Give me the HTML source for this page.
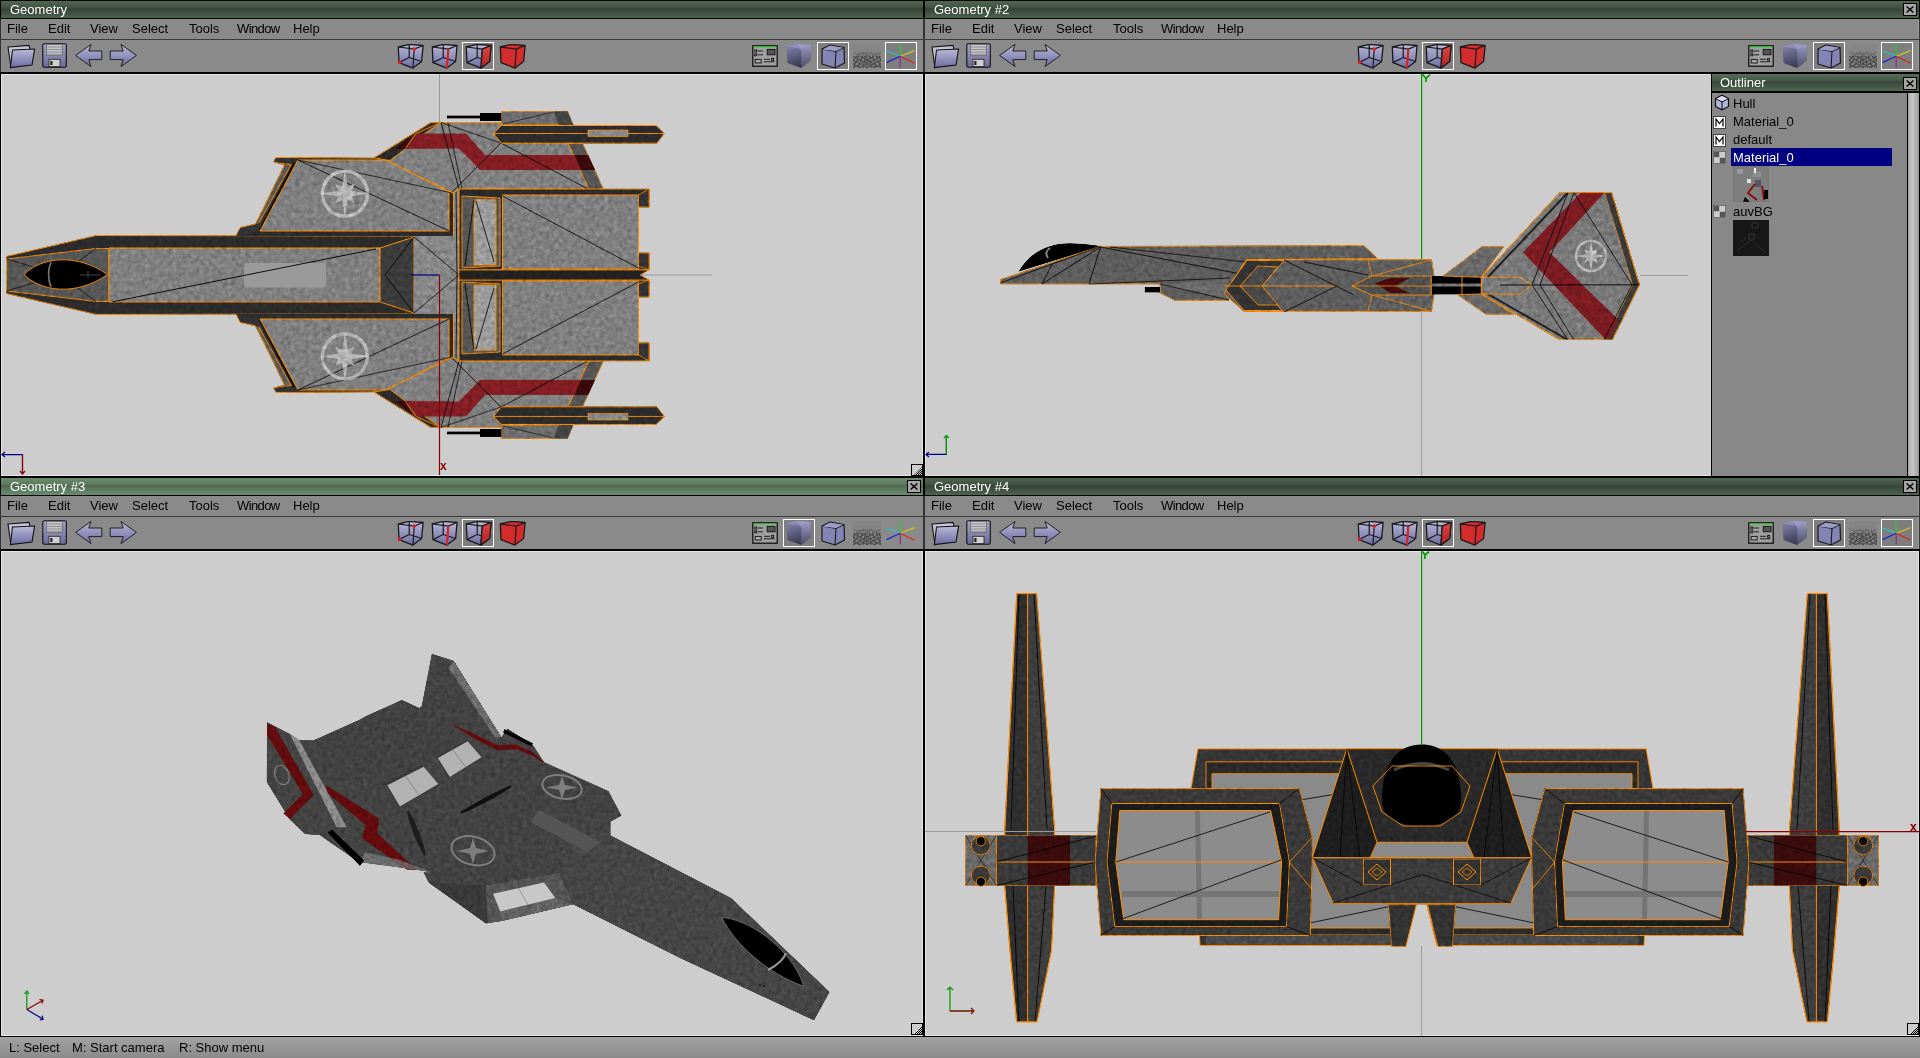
<!DOCTYPE html>
<html><head><meta charset="utf-8"><style>
html,body{margin:0;padding:0;width:1920px;height:1058px;overflow:hidden;background:#000;font-family:"Liberation Sans", sans-serif;font-size:13px}
.t{position:absolute;white-space:nowrap;font-size:13px;will-change:transform}
</style></head><body>

<svg width="0" height="0" style="position:absolute">
<defs>
 <linearGradient id="lav" x1="0" y1="0" x2="0" y2="1"><stop offset="0" stop-color="#b9b9d6"/><stop offset="1" stop-color="#6c6ca4"/></linearGradient>
 <linearGradient id="lav2" x1="0" y1="0" x2="0" y2="1"><stop offset="0" stop-color="#a4a4c8"/><stop offset="1" stop-color="#6a6a98"/></linearGradient>
 <linearGradient id="redg" x1="0" y1="0" x2="0" y2="1"><stop offset="0" stop-color="#e04444"/><stop offset="1" stop-color="#b02222"/></linearGradient>
 <radialGradient id="smooth" cx="0.65" cy="0.3" r="0.9"><stop offset="0" stop-color="#a8a8d0"/><stop offset="1" stop-color="#3c3c58"/></radialGradient>
 <linearGradient id="ttl" x1="0" y1="0" x2="0" y2="1"><stop offset="0" stop-color="#546c55"/><stop offset="0.45" stop-color="#3e4f40"/><stop offset="0.5" stop-color="#36443a"/><stop offset="1" stop-color="#4d634e"/></linearGradient>
 <symbol id="folder" viewBox="0 0 30 26">
  <path d="M1 3 L22 1.4 L23 5 L4 23.5 Z" fill="#c4c4d6" stroke="#111" stroke-width="1.1"/>
  <path d="M5.5 6 L27.6 5 L25 21 L3.4 23.5 Z" fill="url(#lav)" stroke="#111" stroke-width="1.1"/>
 </symbol>
 <symbol id="floppy" viewBox="0 0 26 26">
  <rect x="0.8" y="0.8" width="23.5" height="23.5" rx="1.5" fill="url(#lav2)" stroke="#111" stroke-width="1.1"/>
  <rect x="4.5" y="1.5" width="15.8" height="11" fill="#c8c8cc" stroke="#555" stroke-width="0.6"/>
  <path d="M5 4h15M5 6.5h15M5 9h15M5 11.2h15" stroke="#777" stroke-width="0.7"/>
  <rect x="7" y="16.3" width="11" height="7.3" fill="#d0d0d0" stroke="#222" stroke-width="0.8"/>
  <rect x="8.3" y="18" width="2.2" height="4" fill="#222"/>
 </symbol>
 <symbol id="back" viewBox="0 0 28 24">
  <path d="M0.6 11.4 L16 0.4 L13.8 7 L26.8 7 L26.8 15.6 L13.8 15.6 L16 22.6 Z" fill="url(#lav)" stroke="#222" stroke-width="1"/>
 </symbol>
 <symbol id="fwd" viewBox="0 0 28 24">
  <path d="M27.4 11.4 L12 0.4 L14.2 7 L1.2 7 L1.2 15.6 L14.2 15.6 L12 22.6 Z" fill="url(#lav)" stroke="#222" stroke-width="1"/>
 </symbol>
 <symbol id="cubew" viewBox="0 0 28 26">
  <path d="M1.3 3 L12.2 0.4 L26.1 1.5 L24.6 17.5 L15.9 24.1 L2 18.6 Z" fill="url(#lav)" stroke="#1a1a1a" stroke-width="1.3" stroke-linejoin="round"/>
  <path d="M1.3 3 L17.3 5.1 L26.1 1.5 M17.3 5.1 L15.9 24.1 M12.2 0.4 L12.2 13.5 L2 18.6 M12.2 13.5 L24.6 17.5" fill="none" stroke="#1a1a1a" stroke-width="1.2"/>
 </symbol>
 <symbol id="cubev" viewBox="0 0 28 26">
  <use href="#cubew"/>
  <circle cx="17.3" cy="5.1" r="1.8" fill="#e02020"/><circle cx="2.6" cy="18.4" r="1.8" fill="#e02020"/>
 </symbol>
 <symbol id="cubee" viewBox="0 0 28 26">
  <use href="#cubew"/>
  <path d="M17.3 5.4 L15.9 23.8" stroke="#e02020" stroke-width="2"/>
 </symbol>
 <symbol id="cubef" viewBox="0 0 28 26">
  <use href="#cubew"/>
  <path d="M17.3 5.1 L26.1 1.5 L24.6 17.5 L15.9 24.1 Z" fill="url(#redg)" stroke="#1a1a1a" stroke-width="1.2" stroke-linejoin="round"/>
 </symbol>
 <symbol id="cubes" viewBox="0 0 28 26">
  <path d="M1.3 3 L12.2 0.4 L26.1 1.5 L24.6 17.5 L15.9 24.1 L2 18.6 Z" fill="#d42c2c" stroke="#1a1a1a" stroke-width="1.3" stroke-linejoin="round"/>
  <path d="M1.3 3 L17.3 5.1 L26.1 1.5 M17.3 5.1 L15.9 24.1" fill="none" stroke="#1a1a1a" stroke-width="1.2"/>
 </symbol>
 <symbol id="panel" viewBox="0 0 26 22">
  <rect x="0.8" y="0.8" width="24.4" height="20.4" fill="#a0a0a0" stroke="#111" stroke-width="1.3"/>
  <rect x="1.5" y="1.4" width="23" height="1.2" fill="#3fcf3f"/>
  <rect x="2.8" y="5" width="2" height="2" fill="none" stroke="#111" stroke-width="0.9"/>
  <rect x="2.8" y="8.8" width="2" height="2" fill="none" stroke="#111" stroke-width="0.9"/>
  <path d="M6 6h5M6 9.8h5M12 16.8h10.6M12 14.3h6" stroke="#111" stroke-width="0.9"/>
  <rect x="15.2" y="4.4" width="7.8" height="5.4" fill="#555" stroke="#111" stroke-width="0.9"/>
  <rect x="3.2" y="14.4" width="6" height="3.6" fill="#aaa" stroke="#111" stroke-width="0.9"/>
  <rect x="19.6" y="13.4" width="2" height="2" fill="none" stroke="#111" stroke-width="0.9"/>
 </symbol>
 <symbol id="smoothcube" viewBox="0 0 26 26">
  <defs>
   <linearGradient id="scL" x1="0" y1="0" x2="0.3" y2="1"><stop offset="0" stop-color="#8a8ab4"/><stop offset="1" stop-color="#3a3a54"/></linearGradient>
   <linearGradient id="scR" x1="0" y1="0" x2="0" y2="1"><stop offset="0" stop-color="#a6a6d0"/><stop offset="1" stop-color="#50506e"/></linearGradient>
  </defs>
  <path d="M0.5 3.5 L11 0.8 L25 2 L24.5 17.5 L15 25 L1.5 20 Z" fill="url(#scL)"/>
  <path d="M11 0.8 L25 2 L24.5 17.5 L15 25 L15.5 8 Z" fill="url(#scR)" opacity="0.85"/>
  <path d="M0.5 3.5 L11 0.8 L25 2 L15.5 6 Z" fill="#9a9ac4" opacity="0.6"/>
 </symbol>
 <symbol id="flatcube" viewBox="0 0 26 26">
  <path d="M1 5 L9 1 L23 3.5 L23.5 19 L14 24 L1 20 Z" fill="#8484b4" stroke="#1a1a1a" stroke-width="1.2" stroke-linejoin="round"/>
  <path d="M1 5 L15 7.5 L23 3.5 M15 7.5 L14 24" fill="none" stroke="#1a1a1a" stroke-width="1.1"/>
  <path d="M1.5 5.5 L9 1.7 L22 3.8 L15 7 Z" fill="#9c9cc8"/>
 </symbol>
 <symbol id="grid" viewBox="0 0 28 24">
  <rect x="0" y="0" width="28" height="24" fill="#858585"/>
  <path d="M0 24 L9 6 M5 24 L12 6 M10 24 L14 6 M14 24 L14 6 M18 24 L16 6 M23 24 L18 6 M28 24 L21 6 M0 18 L7 6 M28 18 L24 6" stroke="#444" stroke-width="0.9" fill="none"/>
  <path d="M0 24 L28 8 M0 20 L22 6 M0 15 L15 6 M6 24 L28 12 M13 24 L28 16 M20 24 L28 20" stroke="#444" stroke-width="0.9" fill="none"/>
  <path d="M28 24 L0 8 M28 20 L6 6 M28 15 L13 6 M22 24 L0 12 M15 24 L0 16 M8 24 L0 20" stroke="#444" stroke-width="0.9" fill="none"/>
  <rect x="0" y="0" width="28" height="8" fill="#858585"/>
  <rect x="0" y="7" width="28" height="5" fill="#858585" opacity="0.5"/>
 </symbol>
 <symbol id="axes" viewBox="0 0 32 26">
  <path d="M15.2 1 V13.2" stroke="#1ed21e" stroke-width="1.2"/>
  <path d="M15.2 13.2 V24.5" stroke="#8a2a8a" stroke-width="1.2"/>
  <path d="M15.2 13.2 L29.5 7.6" stroke="#d0c81e" stroke-width="1.2"/>
  <path d="M15.2 13.2 L1.5 8" stroke="#1ec8c8" stroke-width="1.2"/>
  <path d="M15.2 13.2 L1.5 19.6" stroke="#1e1ee6" stroke-width="1.2"/>
  <path d="M15.2 13.2 L29.5 20.2" stroke="#e61e1e" stroke-width="1.2"/>
 </symbol>
 <symbol id="closebtn" viewBox="0 0 14 13">
  <rect x="0.5" y="0.5" width="13" height="12" fill="#a6a6a6" stroke="#000" stroke-width="1"/>
  <path d="M3.6 3.4 L10.4 9.6 M10.4 3.4 L3.6 9.6" stroke="#000" stroke-width="1.4"/>
 </symbol>
 <pattern id="dith" width="2" height="2" patternUnits="userSpaceOnUse"><rect width="1" height="1" fill="#000"/><rect x="1" y="1" width="1" height="1" fill="#000"/></pattern>
</defs>
</svg>

<div style="position:absolute;left:0px;top:0px;width:924px;height:477px;background:#000"></div>
<div style="position:absolute;left:1px;top:1px;width:922px;height:17px;background:linear-gradient(#506650 0px,#425444 6px,#36433a 8px,#384639 9px,#485c4a 15px,#4e6450 17px)"></div>
<div class="t" style="left:10px;top:1px;color:#fff;line-height:17px;">Geometry</div>
<div style="position:absolute;left:0px;top:19px;width:924px;height:20px;background:#333"></div>
<div style="position:absolute;left:1px;top:19px;width:922px;height:20px;background:#8a8a8a"></div>
<div class="t" style="left:7px;top:19px;color:#000;line-height:20px;">File</div>
<div class="t" style="left:48px;top:19px;color:#000;line-height:20px;">Edit</div>
<div class="t" style="left:90px;top:19px;color:#000;line-height:20px;">View</div>
<div class="t" style="left:132px;top:19px;color:#000;line-height:20px;">Select</div>
<div class="t" style="left:189px;top:19px;color:#000;line-height:20px;">Tools</div>
<div class="t" style="left:237px;top:19px;color:#000;line-height:20px;letter-spacing:-0.6px;">Window</div>
<div class="t" style="left:293px;top:19px;color:#000;line-height:20px;">Help</div>
<div style="position:absolute;left:0px;top:39px;width:924px;height:1px;background:#3a3a3a"></div>
<div style="position:absolute;left:0px;top:40px;width:924px;height:33px;background:#333"></div>
<div style="position:absolute;left:1px;top:40px;width:922px;height:32px;background:#8a8a8a"></div>
<div style="position:absolute;left:0px;top:72px;width:924px;height:2px;background:#000"></div>
<svg style="position:absolute;left:7px;top:44px" width="30" height="26" viewBox="0 0 30 26" preserveAspectRatio="none"><use href="#folder" width="30" height="26"/></svg>
<svg style="position:absolute;left:42px;top:43px" width="26" height="26" viewBox="0 0 26 26" preserveAspectRatio="none"><use href="#floppy" width="26" height="26"/></svg>
<svg style="position:absolute;left:75px;top:44px" width="28" height="24" viewBox="0 0 28 24" preserveAspectRatio="none"><use href="#back" width="28" height="24"/></svg>
<svg style="position:absolute;left:109px;top:44px" width="28" height="24" viewBox="0 0 28 24" preserveAspectRatio="none"><use href="#fwd" width="28" height="24"/></svg>
<svg style="position:absolute;left:397px;top:44px" width="28" height="26" viewBox="0 0 28 26" preserveAspectRatio="none"><use href="#cubev" width="28" height="26"/></svg>
<svg style="position:absolute;left:431px;top:44px" width="28" height="26" viewBox="0 0 28 26" preserveAspectRatio="none"><use href="#cubee" width="28" height="26"/></svg>
<div style="position:absolute;left:462px;top:42px;width:32px;height:28px;box-sizing:border-box;border:1px solid #fff;background:#7e7e7e"></div>
<svg style="position:absolute;left:465px;top:44px" width="28" height="26" viewBox="0 0 28 26" preserveAspectRatio="none"><use href="#cubef" width="28" height="26"/></svg>
<svg style="position:absolute;left:499px;top:44px" width="28" height="26" viewBox="0 0 28 26" preserveAspectRatio="none"><use href="#cubes" width="28" height="26"/></svg>
<svg style="position:absolute;left:752px;top:45px" width="26" height="22" viewBox="0 0 26 22" preserveAspectRatio="none"><use href="#panel" width="26" height="22"/></svg>
<svg style="position:absolute;left:786px;top:43px" width="26" height="26" viewBox="0 0 26 26" preserveAspectRatio="none"><use href="#smoothcube" width="26" height="26"/></svg>
<div style="position:absolute;left:817px;top:42px;width:32px;height:28px;box-sizing:border-box;border:1px solid #fff;background:#7e7e7e"></div>
<svg style="position:absolute;left:821px;top:44px" width="26" height="26" viewBox="0 0 26 26" preserveAspectRatio="none"><use href="#flatcube" width="26" height="26"/></svg>
<svg style="position:absolute;left:853px;top:44px" width="28" height="24" viewBox="0 0 28 24" preserveAspectRatio="none"><use href="#grid" width="28" height="24"/></svg>
<div style="position:absolute;left:885px;top:42px;width:32px;height:28px;box-sizing:border-box;border:1px solid #fff;background:#7e7e7e"></div>
<svg style="position:absolute;left:885px;top:43px" width="32" height="26" viewBox="0 0 32 26" preserveAspectRatio="none"><use href="#axes" width="32" height="26"/></svg>
<div style="position:absolute;left:1px;top:74px;width:922px;height:402px;background:#cdcdcd;box-shadow:inset 1px 1px #e4e4e4, inset -1px -1px #e4e4e4;overflow:hidden"></div>
<svg style="position:absolute;left:1px;top:74px" width="922" height="402" viewBox="1 74 922 402"><defs><filter id="tex1" x="0" y="0" width="100%" height="100%" color-interpolation-filters="sRGB"><feTurbulence type="fractalNoise" baseFrequency="0.22" numOctaves="3" seed="7" result="n"/><feColorMatrix in="n" type="matrix" values="0.33 0.33 0.33 0 0  0.33 0.33 0.33 0 0  0.33 0.33 0.33 0 0  0 0 0 0 1" result="g"/><feComposite in="SourceGraphic" in2="g" operator="arithmetic" k1="0.8" k2="0.6" k3="0" k4="0" result="m"/><feComposite in="m" in2="SourceGraphic" operator="in"/></filter></defs><polyline points="439.5,74 439.5,275" fill="none" stroke="#9a9a9a" stroke-width="1"/>
<polyline points="439.5,275 712,275" fill="none" stroke="#9a9a9a" stroke-width="1"/>
<g filter="url(#tex1)">
<g id="sh1"><polygon points="6,275 6,256.5 96,235.5 414,236 414,275" fill="#2c2c2c"/><polyline points="6,275 6,256.5 96,235.5 414,236 414,275" fill="none" stroke="#ff8c00" stroke-width="1.0"/>
<polygon points="6.5,275 6.5,259 96,248.5 109,248.5 109,275" fill="#575757"/><polyline points="6.5,275 6.5,259 96,248.5 109,248.5 109,275" fill="none" stroke="#ff8c00" stroke-width="0.9"/>
<polyline points="7,259 60,275" fill="none" stroke="#111" stroke-width="0.8"/>
<polyline points="96,248.5 60,275" fill="none" stroke="#111" stroke-width="0.8"/>
<polygon points="109,275 109,248 380,248 380,275" fill="#808080"/><polyline points="109,275 109,248 380,248 380,275" fill="none" stroke="#ff8c00" stroke-width="1.0"/>
<polygon points="380,275 380,248 414,237 414,275" fill="#3c3c3c"/><polyline points="380,275 380,248 414,237 414,275" fill="none" stroke="#ff8c00" stroke-width="1.0"/>
<polyline points="414,237 385,275" fill="none" stroke="#000" stroke-width="0.8"/>
<polygon points="453,189 459.5,189 459.5,275 414,275 414,236 453,236" fill="#888888" />
<polyline points="456,189 457,275" fill="none" stroke="#000" stroke-width="0.8"/>
<polyline points="414,237 459,275" fill="none" stroke="#000" stroke-width="0.8"/>
<polygon points="236,236 255.5,224 284.4,165.3 273.4,161.9 275.9,157.5 374,158 431,122.5 441,122.5 459,189 453.5,193 453.5,236" fill="#2c2c2c" />
<polygon points="275.9,157.5 298,160 260.6,231 236,236 240.2,227.4 255.5,224 284.4,165.3 273.4,161.9" fill="#333" />
<polygon points="284.4,165.3 291.2,164.5 258.9,223.1 255.5,224" fill="#5a5a5a" />
<polyline points="294.6,162.8 259.8,230" fill="none" stroke="#111" stroke-width="2.2"/>
<polyline points="275.9,157.5 273.4,161.9 281,163.6 284.4,165.3 255.5,224 240.2,227.4 236,235.5" fill="none" stroke="#ff8c00" stroke-width="1"/>
<polyline points="291.2,164.5 258.9,223.1" fill="none" stroke="#ff8c00" stroke-width="0.9"/>
<polyline points="281,163.6 291.2,164.5" fill="none" stroke="#ff8c00" stroke-width="0.9"/>
<polyline points="275.9,157.5 374,158 431,122.5" fill="none" stroke="#ff8c00" stroke-width="1"/>
<polyline points="459,189 453.5,193 453.5,236" fill="none" stroke="#ff8c00" stroke-width="1"/>
<polygon points="298,160 386,160 449,192 449,231 260,231" fill="#808080" stroke="#ff8c00" stroke-width="1" stroke-linejoin="miter" />
<polyline points="298,160 449,231" fill="none" stroke="#000" stroke-width="0.8"/>
<polyline points="298,160 452,193" fill="none" stroke="#000" stroke-width="0.7"/>
<circle cx="345" cy="193.6" r="22.5" fill="none" stroke="#c8c8c8" stroke-width="3.4" opacity="0.75"/>
<path d="M345.0 168.6 L342.3 187.1 L335.1 183.7 L338.5 190.9 L320.0 193.6 L338.5 196.3 L335.1 203.5 L342.3 200.1 L345.0 218.6 L347.7 200.1 L354.9 203.5 L351.5 196.3 L370.0 193.6 L351.5 190.9 L354.9 183.7 L347.7 187.1 Z" fill="#cccccc" opacity="0.7"/>
<polygon points="386,160 441,122.5 501.4,122.5 501.4,143.2 568,143.2 588.9,189 459,189 453,193" fill="#808080" stroke="#ff8c00" stroke-width="1" stroke-linejoin="miter" />
<polygon points="568,143.2 582.6,143.2 603.4,189 588.9,189" fill="#555" stroke="#ff8c00" stroke-width="0.9" stroke-linejoin="miter" />
<polygon points="395,149 416,133.5 466,133.5 485,155 588,155 595,170 480,170 459,148.5" fill="#841e24" />
<polygon points="574.5,155 588,155 595,170 581,170" fill="#3a0a0a" />
<polygon points="390,160.5 405,149 416,133.5 441,122.5 431,122.5 374,158" fill="#2c2c2c" stroke="#ff8c00" stroke-width="0.9" stroke-linejoin="miter" />
<polygon points="395,149 412,135 405,149" fill="#3a0a0a" />
<polyline points="441,122.5 459,189" fill="none" stroke="#000" stroke-width="0.8"/>
<polyline points="448,122.5 462,189" fill="none" stroke="#000" stroke-width="0.7"/>
<polyline points="452,192 501,143" fill="none" stroke="#000" stroke-width="0.8"/>
<polyline points="501,143 588,189" fill="none" stroke="#000" stroke-width="0.8"/>
<polyline points="441,122.5 501,143" fill="none" stroke="#000" stroke-width="0.7"/>
<polygon points="501.4,111.25 567.5,111.25 573.2,125 501.4,125" fill="#6e6e6e" stroke="#ff8c00" stroke-width="1" stroke-linejoin="miter" />
<polygon points="553.6,111.5 567.5,111.25 573.2,125 558.9,125" fill="#444" />
<polyline points="503,124 553,112" fill="none" stroke="#111" stroke-width="0.7"/>
<polygon points="447,115.5 480,115.5 480,113 501.4,113 501.4,121 480,121 480,118.5 447,118.5" fill="#000" />
<polygon points="493.5,133.5 501.4,125.5 656,125.5 664.4,133.5 657,143.2 501.4,143.2" fill="#2c2c2c" stroke="#ff8c00" stroke-width="1" stroke-linejoin="miter" />
<polyline points="493.5,133.5 664.4,133.5" fill="none" stroke="#ff8c00" stroke-width="0.9"/>
<polygon points="588,130 628,130 628,136.5 588,136.5" fill="#8a8a8a" stroke="#ff8c00" stroke-width="0.7" stroke-linejoin="miter" />
<polygon points="459,275 459,189 649.3,189 649.3,207 638.5,207 638.5,253 649.3,253 649.3,270 459,270" fill="#2c2c2c"/><polyline points="459,275 459,189 649.3,189 649.3,207 638.5,207 638.5,253 649.3,253 649.3,270 459,270" fill="none" stroke="#ff8c00" stroke-width="1.0"/>
<polygon points="502.5,195 638.5,195 638.5,269 502.5,269" fill="#808080" stroke="#ff8c00" stroke-width="1" stroke-linejoin="miter" />
<polyline points="502.5,196 638.5,268" fill="none" stroke="#000" stroke-width="0.8"/>
<polygon points="462,196 500,198 500,266 462,268" fill="#575757" stroke="#ff8c00" stroke-width="0.9" stroke-linejoin="miter" />
<polygon points="474,199.8 496,199.8 496,265 474,265" fill="#9c9c9c" stroke="#ff8c00" stroke-width="0.9" stroke-linejoin="miter" />
<polyline points="476,201 494,262" fill="none" stroke="#000" stroke-width="0.8"/>
<polyline points="474,200 465,266" fill="none" stroke="#000" stroke-width="0.8"/>
<polygon points="638.5,195 649,189 649,207 638.5,207" fill="#333" stroke="#ff8c00" stroke-width="0.8" stroke-linejoin="miter" />
<polygon points="638.5,253 649,253 649,270 638.5,266" fill="#333" stroke="#ff8c00" stroke-width="0.8" stroke-linejoin="miter" />
<polygon points="459,275 459,270 649,270 640,275" fill="#222"/><polyline points="459,275 459,270 649,270 640,275" fill="none" stroke="#ff8c00" stroke-width="0.8"/></g>
<use href="#sh1" transform="matrix(1,0,0,-1,0,550)"/>
</g>
<path d="M24,274.5 C40,258 75,252 107.6,274.5 C75,297 40,291 24,274.5 Z" fill="#000" stroke="#ff8c00" stroke-width="0.9"/>
<path d="M51,262 Q46,274 51,287" stroke="#aaa" stroke-width="1.6" fill="none" opacity="0.7"/>
<path d="M80,275 H100 M88,271 V278" stroke="#555" stroke-width="0.8"/>
<rect x="244" y="263" width="82" height="24.5" rx="4" fill="#9a9a9a"/>
<polyline points="112.6,301.8 376,249" fill="none" stroke="#000" stroke-width="0.9"/>
<polyline points="411,275 439.5,275" fill="none" stroke="#00008b" stroke-width="1.2"/>
<polyline points="439.5,275 439.5,475" fill="none" stroke="#8b0000" stroke-width="1.2"/>
<text x="440" y="470" font-family="Liberation Sans" font-size="12" font-weight="bold" fill="#8b0000">x</text>
<polyline points="2,454.6 22.5,454.6 22.5,474" fill="none" stroke="#00008b" stroke-width="1.2"/>
<polyline points="22.5,454.6 22.5,474" fill="none" stroke="#8b0000" stroke-width="1.2"/>
<polyline points="5,452 2,454.6 5,457" fill="none" stroke="#00008b" stroke-width="1.2"/>
<polyline points="20,471 22.5,474 25,471" fill="none" stroke="#8b0000" stroke-width="1.2"/>
<rect x="911.5" y="464.5" width="11" height="11" fill="none" stroke="#000" stroke-width="1"/>
<path d="M913 476 L923 466 L923 476 Z" fill="url(#dith)"/></svg>
<div style="position:absolute;left:924px;top:0px;width:996px;height:477px;background:#000"></div>
<div style="position:absolute;left:925px;top:1px;width:994px;height:17px;background:linear-gradient(#506650 0px,#425444 6px,#36433a 8px,#384639 9px,#485c4a 15px,#4e6450 17px)"></div>
<div class="t" style="left:934px;top:1px;color:#fff;line-height:17px;">Geometry #2</div>
<svg style="position:absolute;left:1903px;top:3px" width="14" height="13" viewBox="0 0 14 13" preserveAspectRatio="none"><use href="#closebtn" width="14" height="13"/></svg>
<div style="position:absolute;left:924px;top:19px;width:996px;height:20px;background:#333"></div>
<div style="position:absolute;left:925px;top:19px;width:994px;height:20px;background:#8a8a8a;box-shadow:inset -1px 0 #9a9a9a"></div>
<div class="t" style="left:931px;top:19px;color:#000;line-height:20px;">File</div>
<div class="t" style="left:972px;top:19px;color:#000;line-height:20px;">Edit</div>
<div class="t" style="left:1014px;top:19px;color:#000;line-height:20px;">View</div>
<div class="t" style="left:1056px;top:19px;color:#000;line-height:20px;">Select</div>
<div class="t" style="left:1113px;top:19px;color:#000;line-height:20px;">Tools</div>
<div class="t" style="left:1161px;top:19px;color:#000;line-height:20px;letter-spacing:-0.6px;">Window</div>
<div class="t" style="left:1217px;top:19px;color:#000;line-height:20px;">Help</div>
<div style="position:absolute;left:924px;top:39px;width:996px;height:1px;background:#3a3a3a"></div>
<div style="position:absolute;left:924px;top:40px;width:996px;height:33px;background:#333"></div>
<div style="position:absolute;left:925px;top:40px;width:994px;height:32px;background:#8a8a8a;box-shadow:inset -1px 0 #9a9a9a"></div>
<div style="position:absolute;left:924px;top:72px;width:996px;height:2px;background:#000"></div>
<svg style="position:absolute;left:931px;top:44px" width="30" height="26" viewBox="0 0 30 26" preserveAspectRatio="none"><use href="#folder" width="30" height="26"/></svg>
<svg style="position:absolute;left:966px;top:43px" width="26" height="26" viewBox="0 0 26 26" preserveAspectRatio="none"><use href="#floppy" width="26" height="26"/></svg>
<svg style="position:absolute;left:999px;top:44px" width="28" height="24" viewBox="0 0 28 24" preserveAspectRatio="none"><use href="#back" width="28" height="24"/></svg>
<svg style="position:absolute;left:1033px;top:44px" width="28" height="24" viewBox="0 0 28 24" preserveAspectRatio="none"><use href="#fwd" width="28" height="24"/></svg>
<svg style="position:absolute;left:1357px;top:44px" width="28" height="26" viewBox="0 0 28 26" preserveAspectRatio="none"><use href="#cubev" width="28" height="26"/></svg>
<svg style="position:absolute;left:1391px;top:44px" width="28" height="26" viewBox="0 0 28 26" preserveAspectRatio="none"><use href="#cubee" width="28" height="26"/></svg>
<div style="position:absolute;left:1422px;top:42px;width:32px;height:28px;box-sizing:border-box;border:1px solid #fff;background:#7e7e7e"></div>
<svg style="position:absolute;left:1425px;top:44px" width="28" height="26" viewBox="0 0 28 26" preserveAspectRatio="none"><use href="#cubef" width="28" height="26"/></svg>
<svg style="position:absolute;left:1459px;top:44px" width="28" height="26" viewBox="0 0 28 26" preserveAspectRatio="none"><use href="#cubes" width="28" height="26"/></svg>
<svg style="position:absolute;left:1748px;top:45px" width="26" height="22" viewBox="0 0 26 22" preserveAspectRatio="none"><use href="#panel" width="26" height="22"/></svg>
<svg style="position:absolute;left:1782px;top:43px" width="26" height="26" viewBox="0 0 26 26" preserveAspectRatio="none"><use href="#smoothcube" width="26" height="26"/></svg>
<div style="position:absolute;left:1813px;top:42px;width:32px;height:28px;box-sizing:border-box;border:1px solid #fff;background:#7e7e7e"></div>
<svg style="position:absolute;left:1817px;top:44px" width="26" height="26" viewBox="0 0 26 26" preserveAspectRatio="none"><use href="#flatcube" width="26" height="26"/></svg>
<svg style="position:absolute;left:1849px;top:44px" width="28" height="24" viewBox="0 0 28 24" preserveAspectRatio="none"><use href="#grid" width="28" height="24"/></svg>
<div style="position:absolute;left:1881px;top:42px;width:32px;height:28px;box-sizing:border-box;border:1px solid #fff;background:#7e7e7e"></div>
<svg style="position:absolute;left:1881px;top:43px" width="32" height="26" viewBox="0 0 32 26" preserveAspectRatio="none"><use href="#axes" width="32" height="26"/></svg>
<div style="position:absolute;left:925px;top:74px;width:994px;height:402px;background:#cdcdcd;box-shadow:inset 1px 1px #e4e4e4, inset -1px -1px #e4e4e4;overflow:hidden"></div>
<svg style="position:absolute;left:925px;top:74px" width="786" height="402" viewBox="925 74 786 402"><defs><filter id="tex2" x="0" y="0" width="100%" height="100%" color-interpolation-filters="sRGB"><feTurbulence type="fractalNoise" baseFrequency="0.22" numOctaves="3" seed="9" result="n"/><feColorMatrix in="n" type="matrix" values="0.33 0.33 0.33 0 0  0.33 0.33 0.33 0 0  0.33 0.33 0.33 0 0  0 0 0 0 1" result="g"/><feComposite in="SourceGraphic" in2="g" operator="arithmetic" k1="0.8" k2="0.6" k3="0" k4="0" result="m"/><feComposite in="m" in2="SourceGraphic" operator="in"/></filter></defs><polyline points="1421.6,74 1421.6,259" fill="none" stroke="#009900" stroke-width="1.2"/>
<path d="M1422.5 74.5 L1426 78.5 L1430 74.5 M1426 78.5 V82" stroke="#009900" stroke-width="1.7" fill="none"/>
<polyline points="1421.6,311 1421.6,476" fill="none" stroke="#9a9a9a" stroke-width="1"/>
<polyline points="1640,275.5 1688,275.5" fill="none" stroke="#9a9a9a" stroke-width="1"/>
<g filter="url(#tex2)">
<path d="M1018.4,271.7 C1030,252 1048,243 1070.5,243.2 C1085,243.5 1095,245 1100.5,246.3 Z" fill="#000"/>
<path d="M1050,248 Q1044,252 1048,258" stroke="#888" stroke-width="2" fill="none"/>
<polygon points="1000.5,279.5 1100.5,246.3 1363.9,245.6 1377.6,258.6 1246.7,259.7 1224,293.8 1229,300.3 1174.7,300.3 1160,293 1160,284 1000.5,284" fill="#5e5e5e" stroke="#ff8c00" stroke-width="1" stroke-linejoin="miter" />
<polyline points="1000.5,283 1100.5,246.3" fill="none" stroke="#000" stroke-width="0.8"/>
<polyline points="1042,284 1052,264" fill="none" stroke="#000" stroke-width="0.8"/>
<polyline points="1042,284 1100.5,247" fill="none" stroke="#000" stroke-width="0.8"/>
<polyline points="1089,284 1100.5,247" fill="none" stroke="#000" stroke-width="0.8"/>
<polyline points="1100.5,247 1246,275" fill="none" stroke="#000" stroke-width="0.8"/>
<polyline points="1110,247 1246,262" fill="none" stroke="#000" stroke-width="0.7"/>
<polyline points="1089,284 1230,278" fill="none" stroke="#000" stroke-width="0.7"/>
<polygon points="1160,284 1229,280 1229,300" fill="#6a6a6a" />
<polyline points="1160,284 1229,300" fill="none" stroke="#000" stroke-width="0.7"/>
<polygon points="1144.7,287 1160,287 1160,292.5 1144.7,292.5" fill="#000" />
<polygon points="1246.7,259.7 1431.6,259.7 1434,275 1434,295 1431.6,311.4 1244,311.4 1224,293.8" fill="#5e5e5e" stroke="#ff8c00" stroke-width="1" stroke-linejoin="miter" />
<polygon points="1226,290 1247,260.5 1284,260.5 1262,286 1282,310.5 1244,310.5" fill="#333" stroke="#ff8c00" stroke-width="0.9" stroke-linejoin="miter" />
<polygon points="1240,286 1258,266 1278,267 1262,286 1278,305 1258,305" fill="#4a4a4a" stroke="#ff8c00" stroke-width="0.9" stroke-linejoin="miter" />
<polyline points="1224,286 1337,286" fill="none" stroke="#ff8c00" stroke-width="0.9"/>
<polyline points="1284,260 1354,295" fill="none" stroke="#000" stroke-width="0.8"/>
<polyline points="1284,312 1337,286" fill="none" stroke="#000" stroke-width="0.8"/>
<polyline points="1304,262 1368,275" fill="none" stroke="#000" stroke-width="0.8"/>
<polyline points="1368,260 1372,276 1431,260" fill="none" stroke="#ff8c00" stroke-width="0.8"/>
<polyline points="1368,311 1372,295 1431,311" fill="none" stroke="#ff8c00" stroke-width="0.8"/>
<polygon points="1352,286 1372,276 1431,276 1431,295 1372,295" fill="#505050" stroke="#ff8c00" stroke-width="0.9" stroke-linejoin="miter" />
<polygon points="1375,283 1390,278 1410,278 1395,286 1410,293 1390,293" fill="#4a0c0c" />
<polyline points="1352,286 1431,286" fill="none" stroke="#ff8c00" stroke-width="0.8"/>
<polygon points="1432,276 1481,276 1481,294.5 1432,294.5" fill="#000" />
<polygon points="1432,283.5 1481,283.5 1481,286.5 1432,286.5" fill="#777" />
<polyline points="1462,276 1462,294.5" fill="none" stroke="#ff8c00" stroke-width="0.9"/>
<polygon points="1443,276 1482.2,246.3 1504,246.3 1481.4,277.3" fill="#6a6a6a" stroke="#ff8c00" stroke-width="0.9" stroke-linejoin="miter" />
<polygon points="1457,294.5 1486,314.3 1514,314.3 1481.4,294" fill="#6a6a6a" stroke="#ff8c00" stroke-width="0.9" stroke-linejoin="miter" />
<polygon points="1560,192.3 1611.5,192.3 1639.5,284.8 1612.3,340 1560,340 1481.4,294 1481.4,277.3" fill="#7a7a7a" stroke="#ff8c00" stroke-width="1" stroke-linejoin="miter" />
<polyline points="1568,192.5 1488,277" fill="none" stroke="#222" stroke-width="2"/>
<polyline points="1568,340 1488,294" fill="none" stroke="#222" stroke-width="2"/>
<polyline points="1605,192.5 1633,284.8 1606,340" fill="none" stroke="#ff8c00" stroke-width="0.9"/>
<polygon points="1611.5,192.3 1639.5,284.8 1633,284.8 1605,192.5" fill="#3a3a3a" />
<polygon points="1639.5,284.8 1612.3,340 1606,340 1633,284.8" fill="#3a3a3a" />
<polygon points="1581,192.5 1604.7,192.5 1549.5,252.3 1618,319.6 1612,334 1606,340 1523,252.3" fill="#7c1c22" />
<circle cx="1591" cy="256" r="15" fill="none" stroke="#c8c8c8" stroke-width="2.6" opacity="0.75"/>
<path d="M1591.0 240.0 L1589.2 251.6 L1584.3 249.3 L1586.6 254.2 L1575.0 256.0 L1586.6 257.8 L1584.3 262.7 L1589.2 260.4 L1591.0 272.0 L1592.8 260.4 L1597.7 262.7 L1595.4 257.8 L1607.0 256.0 L1595.4 254.2 L1597.7 249.3 L1592.8 251.6 Z" fill="#cfcfcf" opacity="0.7"/>
<polyline points="1500,285 1639.5,284.8" fill="none" stroke="#000" stroke-width="0.9"/>
<polyline points="1481.4,277.3 1520,277.3 1532,285 1520,294 1481.4,294" fill="none" stroke="#ff8c00" stroke-width="0.9"/>
<polyline points="1568,192.5 1532,285 1568,340" fill="none" stroke="#000" stroke-width="0.8"/>
<polyline points="1574,192.5 1540,285 1574,340" fill="none" stroke="#000" stroke-width="0.8"/>
<polyline points="1574,192.5 1632,284.8 1604,340" fill="none" stroke="#000" stroke-width="0.8"/>
<polygon points="1560,192.3 1611.5,192.3 1639.5,284.8 1612.3,340 1560,340 1481.4,294 1481.4,277.3" fill="none" stroke="#ff8c00" stroke-width="1" stroke-linejoin="miter" />
</g>
<polyline points="926,454.4 946.4,454.4 946.4,435.4" fill="none" stroke="#00008b" stroke-width="1.2"/>
<polyline points="946.4,454.4 946.4,435.4" fill="none" stroke="#009900" stroke-width="1.2"/>
<polyline points="929,452 926,454.4 929,457" fill="none" stroke="#00008b" stroke-width="1.2"/>
<polyline points="944,438 946.4,435.4 949,438" fill="none" stroke="#009900" stroke-width="1.2"/></svg>
<div style="position:absolute;left:1710px;top:74px;width:210px;height:403px;background:#000"></div>
<div style="position:absolute;left:1710px;top:74px;width:1px;height:402px;background:#d4d4d4"></div>
<div style="position:absolute;left:1712px;top:74px;width:207px;height:17px;background:linear-gradient(#566e56 0px,#45584a 6px,#37463a 8px,#3b4a3e 9px,#4a5e4c 15px,#52685a 17px)"></div>
<div class="t" style="left:1720px;top:75px;line-height:15px;color:#fff;line-height:16px">Outliner</div>
<svg style="position:absolute;left:1903px;top:77px" width="14" height="13" viewBox="0 0 14 13"><use href="#closebtn" width="14" height="13"/></svg>
<div style="position:absolute;left:1712px;top:93px;width:195px;height:383px;background:#888"></div>
<div style="position:absolute;left:1908px;top:93px;width:11px;height:383px;background:linear-gradient(90deg,#a8a8a8,#c8c8c8 40%,#9a9a9a)"></div>
<svg style="position:absolute;left:1714px;top:94px" width="16" height="17" viewBox="0 0 16 17"><path d="M1.5 4.5 L8 1.2 L14.5 4.5 L14.5 12.5 L8 15.8 L1.5 12.5 Z" fill="#b4b4dc" stroke="#111" stroke-width="1.2"/><path d="M1.5 4.5 L8 7.8 L14.5 4.5 M8 7.8 V15.8" stroke="#111" stroke-width="1.1" fill="none"/><path d="M2.5 4.7 L8 2 L13.5 4.7 L8 7.2 Z" fill="#dcdcf4"/></svg>
<div class="t" style="left:1733px;top:96px;line-height:15px;">Hull</div>
<svg style="position:absolute;left:1713px;top:116px" width="13" height="13" viewBox="0 0 13 13"><rect x="0.5" y="0.5" width="12" height="12" fill="#fff" stroke="#444"/><path d="M3 10.5 V3 L6.5 7.5 L10 3 V10.5" stroke="#000" stroke-width="1.2" fill="none"/></svg>
<svg style="position:absolute;left:1713px;top:134px" width="13" height="13" viewBox="0 0 13 13"><rect x="0.5" y="0.5" width="12" height="12" fill="#fff" stroke="#444"/><path d="M3 10.5 V3 L6.5 7.5 L10 3 V10.5" stroke="#000" stroke-width="1.2" fill="none"/></svg>
<div class="t" style="left:1733px;top:114px;line-height:15px;">Material_0</div>
<div class="t" style="left:1733px;top:132px;line-height:15px;">default</div>
<div style="position:absolute;left:1731px;top:148px;width:161px;height:18px;background:#000080"></div>
<svg style="position:absolute;left:1713px;top:151px" width="13" height="13" viewBox="0 0 13 13"><rect x="0.5" y="0.5" width="12" height="12" fill="#e8e8e8" stroke="#444" stroke-width="0.6"/><rect x="1" y="1" width="5.5" height="5.5" fill="#555"/><rect x="6.5" y="6.5" width="5.5" height="5.5" fill="#555"/><rect x="6.5" y="1" width="5.5" height="5.5" fill="#ccc"/><rect x="1" y="6.5" width="5.5" height="5.5" fill="#ccc"/></svg>
<svg style="position:absolute;left:1713px;top:205px" width="13" height="13" viewBox="0 0 13 13"><rect x="0.5" y="0.5" width="12" height="12" fill="#e8e8e8" stroke="#444" stroke-width="0.6"/><rect x="1" y="1" width="5.5" height="5.5" fill="#555"/><rect x="6.5" y="6.5" width="5.5" height="5.5" fill="#555"/><rect x="6.5" y="1" width="5.5" height="5.5" fill="#ccc"/><rect x="1" y="6.5" width="5.5" height="5.5" fill="#ccc"/></svg>
<div class="t" style="left:1733px;top:150px;line-height:15px;color:#fff">Material_0</div>
<div class="t" style="left:1733px;top:204px;line-height:15px;">auvBG</div>
<svg style="position:absolute;left:1733px;top:166px" width="36" height="36" viewBox="0 0 36 36"><rect width="36" height="36" fill="#7e7e7e"/><rect x="4" y="3" width="6" height="5" fill="#999"/><rect x="20" y="6" width="8" height="5" fill="#999" opacity=".7"/><rect x="14" y="13" width="4" height="4" fill="#ddd"/><rect x="21" y="2" width="2" height="5" fill="#eee"/><rect x="22" y="14" width="6" height="7" fill="#556" /><path d="M22 18 L15 27 L24 34 M29 20 L31 34" stroke="#8a1010" stroke-width="2" fill="none"/><rect x="31" y="24" width="4" height="9" fill="#000"/><path d="M10 36 L12 31 L17 36 Z" fill="#000"/><rect x="0" y="0" width="36" height="36" fill="none" stroke="#6a6a6a" stroke-width="0.5"/></svg>
<svg style="position:absolute;left:1733px;top:220px" width="36" height="36" viewBox="0 0 36 36"><rect width="36" height="36" fill="#171717"/><rect x="19" y="3" width="6" height="5" fill="none" stroke="#333"/><rect x="16" y="14" width="5" height="5" fill="none" stroke="#383838"/><path d="M5 30 L18 20 L33 33 M8 22 L13 18" stroke="#2e2e2e" fill="none"/></svg>
<div style="position:absolute;left:0px;top:477px;width:924px;height:560px;background:#000"></div>
<div style="position:absolute;left:1px;top:478px;width:922px;height:17px;background:linear-gradient(#6c8c6c 0px,#5e7c5f 6px,#4c6650 8px,#527054 9px,#64866a 15px,#6a8c6c 17px)"></div>
<div class="t" style="left:10px;top:478px;color:#fff;line-height:17px;">Geometry #3</div>
<svg style="position:absolute;left:907px;top:480px" width="14" height="13" viewBox="0 0 14 13" preserveAspectRatio="none"><use href="#closebtn" width="14" height="13"/></svg>
<div style="position:absolute;left:0px;top:496px;width:924px;height:20px;background:#333"></div>
<div style="position:absolute;left:1px;top:496px;width:922px;height:20px;background:#8a8a8a"></div>
<div class="t" style="left:7px;top:496px;color:#000;line-height:20px;">File</div>
<div class="t" style="left:48px;top:496px;color:#000;line-height:20px;">Edit</div>
<div class="t" style="left:90px;top:496px;color:#000;line-height:20px;">View</div>
<div class="t" style="left:132px;top:496px;color:#000;line-height:20px;">Select</div>
<div class="t" style="left:189px;top:496px;color:#000;line-height:20px;">Tools</div>
<div class="t" style="left:237px;top:496px;color:#000;line-height:20px;letter-spacing:-0.6px;">Window</div>
<div class="t" style="left:293px;top:496px;color:#000;line-height:20px;">Help</div>
<div style="position:absolute;left:0px;top:516px;width:924px;height:1px;background:#3a3a3a"></div>
<div style="position:absolute;left:0px;top:517px;width:924px;height:33px;background:#333"></div>
<div style="position:absolute;left:1px;top:517px;width:922px;height:32px;background:#8a8a8a"></div>
<div style="position:absolute;left:0px;top:549px;width:924px;height:2px;background:#000"></div>
<svg style="position:absolute;left:7px;top:521px" width="30" height="26" viewBox="0 0 30 26" preserveAspectRatio="none"><use href="#folder" width="30" height="26"/></svg>
<svg style="position:absolute;left:42px;top:520px" width="26" height="26" viewBox="0 0 26 26" preserveAspectRatio="none"><use href="#floppy" width="26" height="26"/></svg>
<svg style="position:absolute;left:75px;top:521px" width="28" height="24" viewBox="0 0 28 24" preserveAspectRatio="none"><use href="#back" width="28" height="24"/></svg>
<svg style="position:absolute;left:109px;top:521px" width="28" height="24" viewBox="0 0 28 24" preserveAspectRatio="none"><use href="#fwd" width="28" height="24"/></svg>
<svg style="position:absolute;left:397px;top:521px" width="28" height="26" viewBox="0 0 28 26" preserveAspectRatio="none"><use href="#cubev" width="28" height="26"/></svg>
<svg style="position:absolute;left:431px;top:521px" width="28" height="26" viewBox="0 0 28 26" preserveAspectRatio="none"><use href="#cubee" width="28" height="26"/></svg>
<div style="position:absolute;left:462px;top:519px;width:32px;height:28px;box-sizing:border-box;border:1px solid #fff;background:#7e7e7e"></div>
<svg style="position:absolute;left:465px;top:521px" width="28" height="26" viewBox="0 0 28 26" preserveAspectRatio="none"><use href="#cubef" width="28" height="26"/></svg>
<svg style="position:absolute;left:499px;top:521px" width="28" height="26" viewBox="0 0 28 26" preserveAspectRatio="none"><use href="#cubes" width="28" height="26"/></svg>
<svg style="position:absolute;left:752px;top:522px" width="26" height="22" viewBox="0 0 26 22" preserveAspectRatio="none"><use href="#panel" width="26" height="22"/></svg>
<div style="position:absolute;left:783px;top:519px;width:32px;height:28px;box-sizing:border-box;border:1px solid #fff;background:#7e7e7e"></div>
<svg style="position:absolute;left:786px;top:520px" width="26" height="26" viewBox="0 0 26 26" preserveAspectRatio="none"><use href="#smoothcube" width="26" height="26"/></svg>
<svg style="position:absolute;left:821px;top:521px" width="26" height="26" viewBox="0 0 26 26" preserveAspectRatio="none"><use href="#flatcube" width="26" height="26"/></svg>
<svg style="position:absolute;left:853px;top:521px" width="28" height="24" viewBox="0 0 28 24" preserveAspectRatio="none"><use href="#grid" width="28" height="24"/></svg>
<svg style="position:absolute;left:885px;top:520px" width="32" height="26" viewBox="0 0 32 26" preserveAspectRatio="none"><use href="#axes" width="32" height="26"/></svg>
<div style="position:absolute;left:1px;top:551px;width:922px;height:485px;background:#cdcdcd;box-shadow:inset 1px 1px #e4e4e4, inset -1px -1px #e4e4e4;overflow:hidden"></div>
<svg style="position:absolute;left:1px;top:551px" width="922" height="485" viewBox="1 551 922 485"><defs><filter id="tex3" x="0" y="0" width="100%" height="100%" color-interpolation-filters="sRGB"><feTurbulence type="fractalNoise" baseFrequency="0.22" numOctaves="3" seed="5" result="n"/><feColorMatrix in="n" type="matrix" values="0.33 0.33 0.33 0 0  0.33 0.33 0.33 0 0  0.33 0.33 0.33 0 0  0 0 0 0 1" result="g"/><feComposite in="SourceGraphic" in2="g" operator="arithmetic" k1="0.9" k2="0.55" k3="0" k4="0" result="m"/><feComposite in="m" in2="SourceGraphic" operator="in"/></filter></defs><g filter="url(#tex3)">
<polygon points="267,722.2 289.8,734 299,740 313.9,740.3 356.9,721.1 363.5,722.4 364.2,717.1 401.9,699.9 419.1,707.9 421.8,705.9 431.9,653.9 453.8,660.9 501.4,737.3 507.4,728.4 533.2,745.2 544.1,762.1 608.6,790.9 621.6,815.7 610.6,821.7 610.6,835.6 731,898 829.5,992 814,1020.3 680,958 573,904.2 501.9,921 486,923.6 428.5,882.5 423.3,872.3 430.2,872.3 416.5,869.7 358.7,862.1 331.5,843.4 319.6,834.9 305.1,834 289.8,819.6 266.8,782.1" fill="#434343" />
<polygon points="313.9,740.3 356.9,721.1 364.2,717.1 401.9,699.9 419.1,707.9 470,735 440,752 387,780 330,770" fill="#424242" />
<polygon points="267,722.2 289.8,734 346.8,827.2 319.6,834.9 305.1,834 289.8,819.6 266.8,782.1" fill="#444" />
<polygon points="289.8,734 299,740 346.8,827.2 336.6,827.2" fill="#8a8a8a" />
<polygon points="267,724 275,727 313.7,795 289.8,819 283.3,813.5 303,794 267,735" fill="#640c0e" />
<ellipse cx="282" cy="775" rx="7" ry="10" fill="none" stroke="#777" stroke-width="1.3" transform="rotate(-20 282 775)"/>
<polygon points="431.9,653.9 453.8,660.9 501.4,737.3 421.8,705.9" fill="#434343" />
<polygon points="453.8,660.9 448,667 495,737.3 501.4,737.3" fill="#6c6c6c" />
<polygon points="445,672 431.9,653.9 453.8,660.9" fill="#434343" />
<polygon points="504.4,729 533,743.3 531.5,746.5 503,732.5" fill="#000" />
<polygon points="450.8,723.4 470.6,732.3 497.4,745.2 515.3,744.3 531.2,751.2 544.1,762.1 541.1,762.1 535.2,757.2 517.3,749.2 497.4,750.2 473.6,738.3" fill="#640c0e" />
<polygon points="325.5,784.7 379.1,818.7 377.4,833.2 416.5,869.7 407,869.7 362.1,838.3 365.5,825.1 327.8,793.2" fill="#640c0e" />
<polygon points="365.5,851.9 400,860 431.9,872.3 416.5,869.7 358.7,862.1" fill="#7a7a7a" opacity="0.7"/>
<polygon points="327.5,832.5 332,829.5 364,860.5 360,866" fill="#000" />
<polygon points="428.5,882.5 486,885.5 487.8,923 486,923.6" fill="#3a3a3a" />
<polygon points="486,885.5 559.5,873 573,904.2 501.9,921 487.8,923" fill="#555" />
<polygon points="500.3,911.5 555.4,898 573,904.2 501.9,921" fill="#626262" />
<polygon points="573,904.2 680,958 814,1020.3 829.5,992 731,898 610.6,835.6 590,830 560,860" fill="#464646" />
</g>
<polygon points="385,783 422,765 439.5,785 398.5,808" fill="#383838" />
<polygon points="387.3,785.3 423.7,766.8 438.3,784 399.9,806.5" fill="#b2b2b2" />
<polyline points="405.5,776 419,795.3" fill="none" stroke="#888" stroke-width="1"/>
<polygon points="436,756.5 468,739.5 483,758 448.5,778.5" fill="#383838" />
<polygon points="437.9,758.1 467.7,741.3 481.6,757.2 449.8,777" fill="#b2b2b2" />
<polyline points="452.8,749.7 465.7,767.1" fill="none" stroke="#888" stroke-width="1"/>
<polygon points="493,893.8 544,882.4 555.4,898 500.3,911.5" fill="#c8c8c8" />
<polyline points="518.5,888 528,904.8" fill="none" stroke="#999" stroke-width="1"/>
<polygon points="538.8,809.6 600,841.9 587.6,852.3 530.4,822" fill="#555" />
<path d="M460.7 812.8 Q488 796 511.3 786 Q486 803 460.7 812.8 Z" fill="#111" stroke="#111" stroke-width="1.8"/>
<path d="M408 811 Q420 832 425 855.3 Q412 833 408 811 Z" fill="#1e1e1e" stroke="#1e1e1e" stroke-width="2"/>
<ellipse cx="562" cy="787" rx="20" ry="11.5" fill="none" stroke="#7e7e7e" stroke-width="2" transform="rotate(12 562 787)"/>
<path d="M562 776 L565 785 L578 787.5 L565 790 L562 799 L559 790 L546 787.5 L559 785 Z" fill="#7e7e7e"/>
<ellipse cx="473" cy="850.8" rx="22" ry="14" fill="none" stroke="#7e7e7e" stroke-width="2" transform="rotate(15 473 850.8)"/>
<path d="M473 838 L476 848 L489 851 L476 854 L473 864 L470 854 L457 851 L470 848 Z" fill="#7e7e7e"/>
<path d="M721.8,917.6 C745,918 790,945 804,986.3 C770,975 735,945 721.8,917.6 Z" fill="#000" stroke="#777" stroke-width="0.8"/>
<path d="M786,953 Q783,962 768,970" stroke="#999" stroke-width="2.2" fill="none"/>
<rect x="759" y="984" width="2" height="2" fill="#222"/><rect x="763" y="985" width="2" height="2" fill="#222"/>
<polyline points="26.8,991.1 26.8,1009.5" fill="none" stroke="#009900" stroke-width="1.2"/>
<polyline points="26.8,1009.5 43.1,1019.2" fill="none" stroke="#00008b" stroke-width="1.2"/>
<polyline points="26.8,1009.5 43.1,1000.3" fill="none" stroke="#8b0000" stroke-width="1.2"/>
<polyline points="24.5,994 26.8,991.1 29,994" fill="none" stroke="#009900" stroke-width="1.2"/>
<polyline points="39.5,999.5 43.1,1000.3 41.8,1003.5" fill="none" stroke="#8b0000" stroke-width="1.2"/>
<polyline points="39.8,1020 43.1,1019.2 42,1015.8" fill="none" stroke="#00008b" stroke-width="1.2"/>
<rect x="911.5" y="1023.5" width="11" height="11" fill="none" stroke="#000" stroke-width="1"/>
<path d="M913 1035 L923 1025 L923 1035 Z" fill="url(#dith)"/></svg>
<div style="position:absolute;left:924px;top:477px;width:996px;height:560px;background:#000"></div>
<div style="position:absolute;left:925px;top:478px;width:994px;height:17px;background:linear-gradient(#506650 0px,#425444 6px,#36433a 8px,#384639 9px,#485c4a 15px,#4e6450 17px)"></div>
<div class="t" style="left:934px;top:478px;color:#fff;line-height:17px;">Geometry #4</div>
<svg style="position:absolute;left:1903px;top:480px" width="14" height="13" viewBox="0 0 14 13" preserveAspectRatio="none"><use href="#closebtn" width="14" height="13"/></svg>
<div style="position:absolute;left:924px;top:496px;width:996px;height:20px;background:#333"></div>
<div style="position:absolute;left:925px;top:496px;width:994px;height:20px;background:#8a8a8a;box-shadow:inset -1px 0 #9a9a9a"></div>
<div class="t" style="left:931px;top:496px;color:#000;line-height:20px;">File</div>
<div class="t" style="left:972px;top:496px;color:#000;line-height:20px;">Edit</div>
<div class="t" style="left:1014px;top:496px;color:#000;line-height:20px;">View</div>
<div class="t" style="left:1056px;top:496px;color:#000;line-height:20px;">Select</div>
<div class="t" style="left:1113px;top:496px;color:#000;line-height:20px;">Tools</div>
<div class="t" style="left:1161px;top:496px;color:#000;line-height:20px;letter-spacing:-0.6px;">Window</div>
<div class="t" style="left:1217px;top:496px;color:#000;line-height:20px;">Help</div>
<div style="position:absolute;left:924px;top:516px;width:996px;height:1px;background:#3a3a3a"></div>
<div style="position:absolute;left:924px;top:517px;width:996px;height:33px;background:#333"></div>
<div style="position:absolute;left:925px;top:517px;width:994px;height:32px;background:#8a8a8a;box-shadow:inset -1px 0 #9a9a9a"></div>
<div style="position:absolute;left:924px;top:549px;width:996px;height:2px;background:#000"></div>
<svg style="position:absolute;left:931px;top:521px" width="30" height="26" viewBox="0 0 30 26" preserveAspectRatio="none"><use href="#folder" width="30" height="26"/></svg>
<svg style="position:absolute;left:966px;top:520px" width="26" height="26" viewBox="0 0 26 26" preserveAspectRatio="none"><use href="#floppy" width="26" height="26"/></svg>
<svg style="position:absolute;left:999px;top:521px" width="28" height="24" viewBox="0 0 28 24" preserveAspectRatio="none"><use href="#back" width="28" height="24"/></svg>
<svg style="position:absolute;left:1033px;top:521px" width="28" height="24" viewBox="0 0 28 24" preserveAspectRatio="none"><use href="#fwd" width="28" height="24"/></svg>
<svg style="position:absolute;left:1357px;top:521px" width="28" height="26" viewBox="0 0 28 26" preserveAspectRatio="none"><use href="#cubev" width="28" height="26"/></svg>
<svg style="position:absolute;left:1391px;top:521px" width="28" height="26" viewBox="0 0 28 26" preserveAspectRatio="none"><use href="#cubee" width="28" height="26"/></svg>
<div style="position:absolute;left:1422px;top:519px;width:32px;height:28px;box-sizing:border-box;border:1px solid #fff;background:#7e7e7e"></div>
<svg style="position:absolute;left:1425px;top:521px" width="28" height="26" viewBox="0 0 28 26" preserveAspectRatio="none"><use href="#cubef" width="28" height="26"/></svg>
<svg style="position:absolute;left:1459px;top:521px" width="28" height="26" viewBox="0 0 28 26" preserveAspectRatio="none"><use href="#cubes" width="28" height="26"/></svg>
<svg style="position:absolute;left:1748px;top:522px" width="26" height="22" viewBox="0 0 26 22" preserveAspectRatio="none"><use href="#panel" width="26" height="22"/></svg>
<svg style="position:absolute;left:1782px;top:520px" width="26" height="26" viewBox="0 0 26 26" preserveAspectRatio="none"><use href="#smoothcube" width="26" height="26"/></svg>
<div style="position:absolute;left:1813px;top:519px;width:32px;height:28px;box-sizing:border-box;border:1px solid #fff;background:#7e7e7e"></div>
<svg style="position:absolute;left:1817px;top:521px" width="26" height="26" viewBox="0 0 26 26" preserveAspectRatio="none"><use href="#flatcube" width="26" height="26"/></svg>
<svg style="position:absolute;left:1849px;top:521px" width="28" height="24" viewBox="0 0 28 24" preserveAspectRatio="none"><use href="#grid" width="28" height="24"/></svg>
<div style="position:absolute;left:1881px;top:519px;width:32px;height:28px;box-sizing:border-box;border:1px solid #fff;background:#7e7e7e"></div>
<svg style="position:absolute;left:1881px;top:520px" width="32" height="26" viewBox="0 0 32 26" preserveAspectRatio="none"><use href="#axes" width="32" height="26"/></svg>
<div style="position:absolute;left:925px;top:551px;width:994px;height:485px;background:#cdcdcd;box-shadow:inset 1px 1px #e4e4e4, inset -1px -1px #e4e4e4;overflow:hidden"></div>
<svg style="position:absolute;left:925px;top:551px" width="994" height="485" viewBox="925 551 994 485"><defs><filter id="tex4" x="0" y="0" width="100%" height="100%" color-interpolation-filters="sRGB"><feTurbulence type="fractalNoise" baseFrequency="0.22" numOctaves="3" seed="11" result="n"/><feColorMatrix in="n" type="matrix" values="0.33 0.33 0.33 0 0  0.33 0.33 0.33 0 0  0.33 0.33 0.33 0 0  0 0 0 0 1" result="g"/><feComposite in="SourceGraphic" in2="g" operator="arithmetic" k1="0.9" k2="0.55" k3="0" k4="0" result="m"/><feComposite in="m" in2="SourceGraphic" operator="in"/></filter></defs><g id="sh4"><polygon points="1422,748.9 1197.8,748.9 1191.2,787.6 1200,945.5 1422,945.5" fill="#363636" filter="url(#tex4)"/><polyline points="1422,748.9 1197.8,748.9 1191.2,787.6 1200,945.5 1422,945.5" fill="none" stroke="#ff8c00" stroke-width="1.0"/>
<polygon points="1422,761.8 1206,761.8 1206,935 1422,935" fill="#2a2a2a" filter="url(#tex4)"/><polyline points="1422,761.8 1206,761.8 1206,935 1422,935" fill="none" stroke="#ff8c00" stroke-width="0.9"/>
<polygon points="1422,773.7 1212,773.7 1212,928 1422,928" fill="#8a8a8a"/><polyline points="1422,773.7 1212,773.7 1212,928 1422,928" fill="none" stroke="#ff8c00" stroke-width="0.9"/>
<polygon points="1206,935 1422,935 1422,945 1206,945" fill="#4a4a4a" filter="url(#tex4)" />
<polyline points="1300,800 1421,780" fill="none" stroke="#000" stroke-width="0.8"/>
<polyline points="1300,925 1421,900" fill="none" stroke="#000" stroke-width="0.8"/>
<polygon points="1016.7,593.6 1036.6,593.6 1054.6,830 1054.6,886 1051.5,950 1037,1022 1016.6,1022 1009.9,950 1004.7,886 1004.7,830" fill="#303030" filter="url(#tex4)" stroke="#ff8c00" stroke-width="1" stroke-linejoin="miter" />
<polygon points="1027.6,594 1036.6,594 1054,830 1054,886 1051,950 1037,1021 1027.6,1021" fill="#3e3e3e" filter="url(#tex4)" />
<polyline points="1027.6,594 1027.6,1022" fill="none" stroke="#ff8c00" stroke-width="1"/>
<polyline points="1019,594 1011,830" fill="none" stroke="#000" stroke-width="0.8"/>
<polyline points="1034,594 1047,830" fill="none" stroke="#000" stroke-width="0.8"/>
<polyline points="1013,886 1019,1022" fill="none" stroke="#000" stroke-width="0.8"/>
<polyline points="1046,886 1035,1022" fill="none" stroke="#000" stroke-width="0.8"/>
<polygon points="1016.7,593.6 1036.6,593.6 1054.6,830 1054.6,886 1051.5,950 1037,1022 1016.6,1022 1009.9,950 1004.7,886 1004.7,830" fill="none" stroke="#ff8c00" stroke-width="1" stroke-linejoin="miter" />
<polygon points="965.2,835 1096.1,835 1096.1,885.9 965.2,885.9" fill="#3a3a3a" filter="url(#tex4)" stroke="#ff8c00" stroke-width="1" stroke-linejoin="miter" />
<polygon points="1027.6,835.5 1070.2,835.5 1070.2,885.5 1027.6,885.5" fill="#3a0c0c" filter="url(#tex4)" />
<polyline points="996.4,862 1096.1,862" fill="none" stroke="#ff8c00" stroke-width="1"/>
<polyline points="996.4,862 1096,836" fill="none" stroke="#000" stroke-width="0.8"/>
<polyline points="996.4,885.5 1096,862" fill="none" stroke="#000" stroke-width="0.8"/>
<polygon points="965.2,835 996.4,835 996.4,885.9 965.2,885.9" fill="#6a6a6a" filter="url(#tex4)" stroke="#ff8c00" stroke-width="1" stroke-linejoin="miter" />
<polyline points="966,836 996,885" fill="none" stroke="#222" stroke-width="0.7"/>
<polyline points="996,836 966,885" fill="none" stroke="#222" stroke-width="0.7"/>
<circle cx="980.8" cy="845.4" r="9.5" fill="#3a3a3a" filter="url(#tex4)" stroke="#ff8c00" stroke-width="1"/><circle cx="980.8" cy="841.2" r="4.6" fill="#000" stroke="#ff8c00" stroke-width="0.8"/>
<circle cx="980.8" cy="875.5" r="9.5" fill="#3a3a3a" filter="url(#tex4)" stroke="#ff8c00" stroke-width="1"/><circle cx="980.8" cy="881.7" r="4.6" fill="#000" stroke="#ff8c00" stroke-width="0.8"/>
<polygon points="1100.9,788.6 1299.4,788.6 1312.3,837.3 1312.3,862 1310.3,935.5 1100.9,935.5 1095,862" fill="#3a3a3a" filter="url(#tex4)" stroke="#ff8c00" stroke-width="1" stroke-linejoin="miter" />
<polygon points="1111.8,803.5 1279.6,803.5 1289.5,862 1286.5,926.6 1114.8,926.6 1106.9,862" fill="#1c1c1c" filter="url(#tex4)" stroke="#ff8c00" stroke-width="1" stroke-linejoin="miter" />
<polygon points="1119.8,810.5 1270.6,810.5 1281.6,862 1278.6,919.7 1123.7,919.7 1115.8,862" fill="#8c8c8c" stroke="#ff8c00" stroke-width="1" stroke-linejoin="miter" />
<polygon points="1195,811 1200,811 1202,919 1197,919" fill="#757575" />
<polygon points="1122,891 1279,891 1279,897 1122,897" fill="#757575" />
<polyline points="1115.8,862 1281.6,862" fill="none" stroke="#ff8c00" stroke-width="1"/>
<polyline points="1116,862 1270,812" fill="none" stroke="#000" stroke-width="0.8"/>
<polyline points="1122,919 1281,860" fill="none" stroke="#000" stroke-width="0.8"/>
<polyline points="1100.9,788.6 1111.8,803.5" fill="none" stroke="#000" stroke-width="0.8"/>
<polyline points="1299.4,788.6 1279.6,803.5" fill="none" stroke="#000" stroke-width="0.8"/>
<polyline points="1310.3,935.5 1286.5,926.6" fill="none" stroke="#000" stroke-width="0.8"/>
<polyline points="1100.9,935.5 1114.8,926.6" fill="none" stroke="#000" stroke-width="0.8"/>
<polyline points="1289.5,862 1312.3,837.3" fill="none" stroke="#ff8c00" stroke-width="0.8"/>
<polyline points="1289.5,862 1312.3,890" fill="none" stroke="#ff8c00" stroke-width="0.8"/>
<polygon points="1346.8,748.7 1422,748.7 1422,857.9 1312.5,856.9" fill="#1e1e1e" filter="url(#tex4)" />
<polygon points="1346.8,748.7 1422,748.7 1422,842.3 1377,842.3" fill="#2a2a2a" filter="url(#tex4)" />
<polyline points="1312.5,856.9 1346.8,748.7 1377,842.3" fill="none" stroke="#ff8c00" stroke-width="1"/>
<polyline points="1346.8,748.7 1422,748.7" fill="none" stroke="#ff8c00" stroke-width="1"/>
<polyline points="1346.8,749 1340,857" fill="none" stroke="#000" stroke-width="0.7"/>
<polyline points="1346.8,749 1360,857" fill="none" stroke="#000" stroke-width="0.7"/>
<polygon points="1422,842.3 1377,842.3 1370,857.9 1422,857.9" fill="#8a8a8a"/><polyline points="1422,842.3 1377,842.3 1370,857.9 1422,857.9" fill="none" stroke="#ff8c00" stroke-width="0.9"/>
<polygon points="1312.5,857.9 1422,857.9 1422,903.7 1333.3,903.7" fill="#3c3c3c" filter="url(#tex4)" />
<polyline points="1312.5,857.9 1422,857.9" fill="none" stroke="#ff8c00" stroke-width="1"/>
<polyline points="1312.5,857.9 1333.3,903.7 1422,903.7" fill="none" stroke="#ff8c00" stroke-width="1"/>
<polyline points="1312.5,858 1363,885" fill="none" stroke="#000" stroke-width="0.7"/>
<polyline points="1333,903 1421,875" fill="none" stroke="#000" stroke-width="0.7"/>
<polygon points="1363.4,859 1390.5,859 1390.5,885 1363.4,885" fill="#333" filter="url(#tex4)" stroke="#ff8c00" stroke-width="1" stroke-linejoin="miter" />
<path d="M1377 864 L1386 872 L1377 880 L1368 872 Z" fill="none" stroke="#ff8c00" stroke-width="1"/>
<path d="M1377 868 L1382 872 L1377 876 L1372 872 Z" fill="none" stroke="#ff8c00" stroke-width="0.7"/>
<polygon points="1388.4,904.7 1416.5,904.7 1406,946.4 1391.5,946.4" fill="#333" filter="url(#tex4)" stroke="#ff8c00" stroke-width="0.9" stroke-linejoin="miter" /></g>
<use href="#sh4" transform="matrix(-1,0,0,1,2844,0)"/>
<polyline points="925,831.5 1096,831.5" fill="none" stroke="#9a9a9a" stroke-width="1"/>
<polygon points="1416.5,904.7 1426.7,904.7 1437,946.5 1406,946.5" fill="#cdcdcd" />
<polyline points="1416.5,904.7 1406,946.4" fill="none" stroke="#ff8c00" stroke-width="0.9"/>
<polyline points="1426.7,904.7 1437,946.4" fill="none" stroke="#ff8c00" stroke-width="0.9"/>
<path d="M1382,800 C1382,760 1400,744.5 1421.6,744.5 C1443,744.5 1461,760 1461,800 C1461,818 1445,826 1421.6,826 C1398,826 1382,818 1382,800 Z" fill="#000"/>
<path d="M1394,770 Q1421,757 1449,770" stroke="#444" stroke-width="3" fill="none"/>
<polyline points="1372.8,786 1392,766 1452,766 1470,786 1461,812 1440,826 1403,826 1382,812 1372.8,786" fill="none" stroke="#ff8c00" stroke-width="0.9"/>
<polyline points="1421.6,551 1421.6,745" fill="none" stroke="#009900" stroke-width="1.2"/>
<path d="M1422.5 551.5 L1425 555 L1429 551.5 M1425 555 V559" stroke="#009900" stroke-width="1.7" fill="none"/>
<polyline points="1421.6,946 1421.6,1036" fill="none" stroke="#9a9a9a" stroke-width="1"/>
<polyline points="1745.5,831.7 1919,831.7" fill="none" stroke="#8b0000" stroke-width="1.2"/>
<text x="1910" y="831" font-family="Liberation Sans" font-size="12" font-weight="bold" fill="#8b0000">x</text>
<polyline points="950,987 950,1011 974,1011" fill="none" stroke="#009900" stroke-width="1.2"/>
<polyline points="950,1011 974,1011" fill="none" stroke="#8b0000" stroke-width="1.2"/>
<polyline points="947,990 950,987 953,990" fill="none" stroke="#009900" stroke-width="1.2"/>
<polyline points="971,1008 974,1011 971,1014" fill="none" stroke="#8b0000" stroke-width="1.2"/>
<rect x="1907.5" y="1023.5" width="11" height="11" fill="none" stroke="#000" stroke-width="1"/>
<path d="M1909 1035 L1919 1025 L1919 1035 Z" fill="url(#dith)"/></svg>
<div style="position:absolute;left:0px;top:1037px;width:1920px;height:21px;background:linear-gradient(#a2a2a2,#8a8a8a)"></div>
<div class="t" style="left:9px;top:1039px;line-height:17px;color:#000">L: Select</div>
<div class="t" style="left:72px;top:1039px;line-height:17px;color:#000">M: Start camera</div>
<div class="t" style="left:179px;top:1039px;line-height:17px;color:#000">R: Show menu</div>
</body></html>
